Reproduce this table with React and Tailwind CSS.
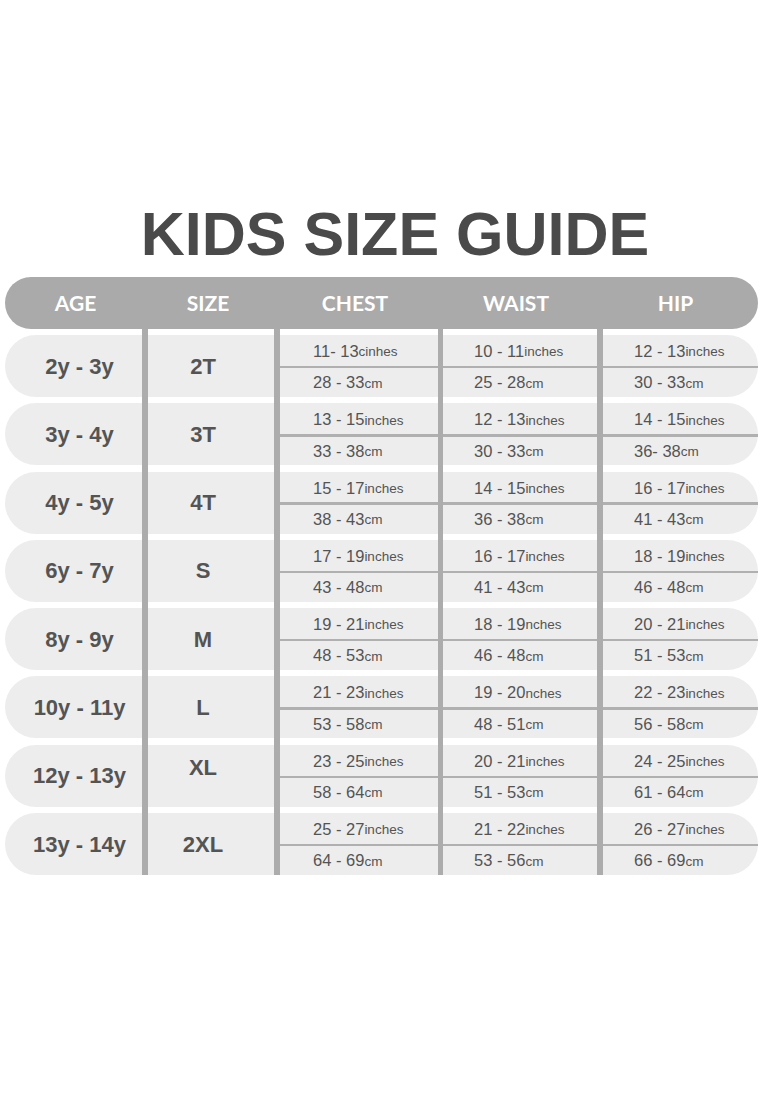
const rows = [
  {
    age: "2y - 3y",
    size: "2T",
    chest: ["11- 13", "cinhes", "28 - 33", "cm"],
    waist: ["10 - 11", "inches", "25 - 28", "cm"],
    hip: ["12 - 13", "inches", "30 - 33", "cm"],
  },
  {
    age: "3y - 4y",
    size: "3T",
    chest: ["13 - 15", "inches", "33 - 38", "cm"],
    waist: ["12 - 13", "inches", "30 - 33", "cm"],
    hip: ["14 - 15", "inches", "36- 38", "cm"],
  },
  {
    age: "4y - 5y",
    size: "4T",
    chest: ["15 - 17", "inches", "38 - 43", "cm"],
    waist: ["14 - 15", "inches", "36 - 38", "cm"],
    hip: ["16 - 17", "inches", "41 - 43", "cm"],
  },
  {
    age: "6y - 7y",
    size: "S",
    chest: ["17 - 19", "inches", "43 - 48", "cm"],
    waist: ["16 - 17", "inches", "41 - 43", "cm"],
    hip: ["18 - 19", "inches", "46 - 48", "cm"],
  },
  {
    age: "8y - 9y",
    size: "M",
    chest: ["19 - 21", "inches", "48 - 53", "cm"],
    waist: ["18 - 19", "nches", "46 - 48", "cm"],
    hip: ["20 - 21", "inches", "51 - 53", "cm"],
  },
  {
    age: "10y - 11y",
    size: "L",
    chest: ["21 - 23", "inches", "53 - 58", "cm"],
    waist: ["19 - 20", "nches", "48 - 51", "cm"],
    hip: ["22 - 23", "inches", "56 - 58", "cm"],
  },
  {
    age: "12y - 13y",
    size: "XL",
    chest: ["23 - 25", "inches", "58 - 64", "cm"],
    waist: ["20 - 21", "inches", "51 - 53", "cm"],
    hip: ["24 - 25", "inches", "61 - 64", "cm"],
  },
  {
    age: "13y - 14y",
    size: "2XL",
    chest: ["25 - 27", "inches", "64 - 69", "cm"],
    waist: ["21 - 22", "inches", "53 - 56", "cm"],
    hip: ["26 - 27", "inches", "66 - 69", "cm"],
  },
];

function Divider() {
  return <div className="w-[6px] self-stretch bg-[#acacac]" />;
}

function Measure({ m, last, pad }) {
  return (
    <div
      className={
        "h-[62px] flex flex-col bg-[#ededed] " + (last ? "rounded-r-[31px]" : "")
      }
    >
      <div className={"flex-1 flex items-center pt-[2px] " + pad}>
        <span className="text-[16.5px]">{m[0]}</span>
        <span className="text-[13.5px] mt-[2px]">{m[1]}</span>
      </div>
      <div className="h-[2.5px] bg-[#b0b0b0]" />
      <div className={"flex-1 flex items-center " + pad}>
        <span className="text-[16.5px]">{m[2]}</span>
        <span className="text-[13.5px] mt-[2px]">{m[3]}</span>
      </div>
    </div>
  );
}

export default function App() {
  return (
    <div className="w-[762px] h-[1100px] bg-white text-[#545454] font-['Liberation_Sans',Arial,sans-serif]">
      <h1 className="pt-[204px] pl-[28px] text-center text-[61px] leading-none font-bold text-[#4a4a4a]">
        KIDS SIZE GUIDE
      </h1>

      <div className="mt-[12px] ml-[5px] w-[753px] h-[52px] rounded-full bg-[#aaaaaa] flex items-center text-white text-[21px] font-bold font-['Lato','Noto_Sans',sans-serif]">
        <div className="w-[137px] text-center pl-[4px]">AGE</div>
        <div className="w-[6px]" />
        <div className="w-[126px] text-center pr-[6px]">SIZE</div>
        <div className="w-[6px]" />
        <div className="w-[158px] text-center pr-[8px]">CHEST</div>
        <div className="w-[5px]" />
        <div className="w-[154px] text-center pr-[8px]">WAIST</div>
        <div className="w-[6px]" />
        <div className="w-[155px] text-center pr-[10px]">HIP</div>
      </div>

      <div className="ml-[5px] w-[753px] flex">
        <div className="w-[137px] pt-[6px] flex flex-col gap-[6.3px]">
          {rows.map((r) => (
            <div
              key={r.age}
              className="h-[62px] rounded-l-[31px] bg-[#ededed] flex items-center justify-center pl-[12px] text-[22px] font-bold"
            >
              {r.age}
            </div>
          ))}
        </div>
        <Divider />
        <div className="w-[126px] pt-[6px] flex flex-col gap-[6.3px]">
          {rows.map((r) => (
            <div
              key={r.size}
              className={
                "h-[62px] bg-[#ededed] flex justify-center pr-[16px] text-[22px] font-bold " +
                (r.size === "XL" ? "items-start pt-[6px]" : "items-center")
              }
            >
              {r.size}
            </div>
          ))}
        </div>
        <Divider />
        <div className="w-[158px] pt-[6px] flex flex-col gap-[6.3px]">
          {rows.map((r) => (
            <Measure key={r.age} m={r.chest} pad="pl-[33px]" />
          ))}
        </div>
        <div className="w-[5px] self-stretch bg-[#acacac]" />
        <div className="w-[154px] pt-[6px] flex flex-col gap-[6.3px]">
          {rows.map((r) => (
            <Measure key={r.age} m={r.waist} pad="pl-[31px]" />
          ))}
        </div>
        <Divider />
        <div className="w-[155px] pt-[6px] flex flex-col gap-[6.3px]">
          {rows.map((r) => (
            <Measure key={r.age} m={r.hip} pad="pl-[31px]" last />
          ))}
        </div>
      </div>
    </div>
  );
}
